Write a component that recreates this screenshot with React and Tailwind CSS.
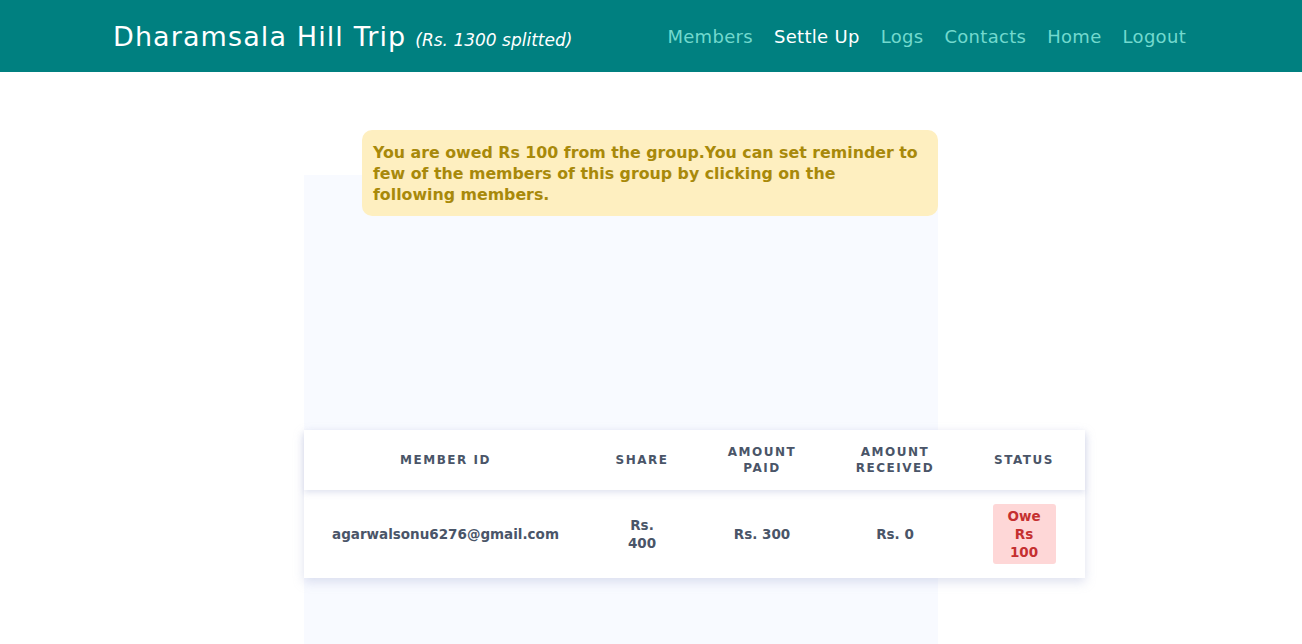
import React from 'react';

const font = { fontFamily: '"DejaVu Sans", "Open Sans", sans-serif' };

const navLinks = [
  { label: 'Members', active: false },
  { label: 'Settle Up', active: true },
  { label: 'Logs', active: false },
  { label: 'Contacts', active: false },
  { label: 'Home', active: false },
  { label: 'Logout', active: false },
];

const members = [
  { id: 'agarwalsonu6276@gmail.com', share: 400, paid: 300, received: 0, owe: 100 },
];

const App = () => {
  return (
    <div className="min-h-screen bg-white overflow-hidden" style={font}>
      {/* 顶部导航 */}
      <header className="bg-[#008080] h-[72px]">
        <div className="mx-auto w-[1076px] h-full flex items-center justify-between">
          <h1 className="text-white text-[27px] tracking-[1.1px] flex items-baseline gap-[9px] pt-[2px]">
            Dharamsala Hill Trip
            <span className="italic text-[17px] tracking-normal">(Rs. 1300 splitted)</span>
          </h1>
          <nav className="flex items-center gap-[21px] text-[18px] tracking-[0.3px] mr-[3px]">
            {navLinks.map((link) => (
              <a
                key={link.label}
                href="#"
                className={link.active ? 'text-white' : 'text-[#72d9ce]'}
              >
                {link.label}
              </a>
            ))}
          </nav>
        </div>
      </header>

      <div className="mx-auto w-[1076px]">
        <div className="ml-[191px] w-[634px] mt-[103px] bg-[#f8faff] h-[469px] flex flex-col">
          {/* 提示信息 */}
          <div className="-mt-[45px] ml-[58px] w-[576px] bg-[#feefc0] rounded-[10px] pl-[11px] pr-[17px] pt-[12px] pb-[11px]">
            <p className="text-[#a8890a] text-[15.8px] font-bold leading-[21px]">
              You are owed Rs 100 from the group.You can set reminder to few of the members of this group by clicking on the following members.
            </p>
          </div>

          {/* 成员表格 */}
          <div className="mt-[214px] w-[781px] bg-white shadow-[0_4px_10px_rgba(160,170,210,0.35)]">
            <div className="grid grid-cols-[283px_110px_130px_136px_122px] h-[60px] items-center text-[12px] font-bold tracking-[1.5px] uppercase text-[#4a5568] text-center leading-[16px] shadow-[0_3px_6px_rgba(160,170,210,0.3)] relative">
              <div>Member ID</div>
              <div>Share</div>
              <div>Amount<br />Paid</div>
              <div>Amount<br />Received</div>
              <div>Status</div>
            </div>
            {members.map((m) => (
              <div
                key={m.id}
                className="grid grid-cols-[283px_110px_130px_136px_122px] h-[88px] items-center text-[13.5px] font-bold text-[#4a5568] text-center leading-[18px]"
              >
                <div>{m.id}</div>
                <div>Rs.<br />{m.share}</div>
                <div>Rs. {m.paid}</div>
                <div>Rs. {m.received}</div>
                <div className="flex justify-center">
                  <span className="bg-[#fed7d7] text-[#c53030] rounded-[3px] w-[63px] py-[3px] leading-[18px]">
                    Owe<br />Rs<br />{m.owe}
                  </span>
                </div>
              </div>
            ))}
          </div>
        </div>
      </div>
    </div>
  );
};

export default App;
